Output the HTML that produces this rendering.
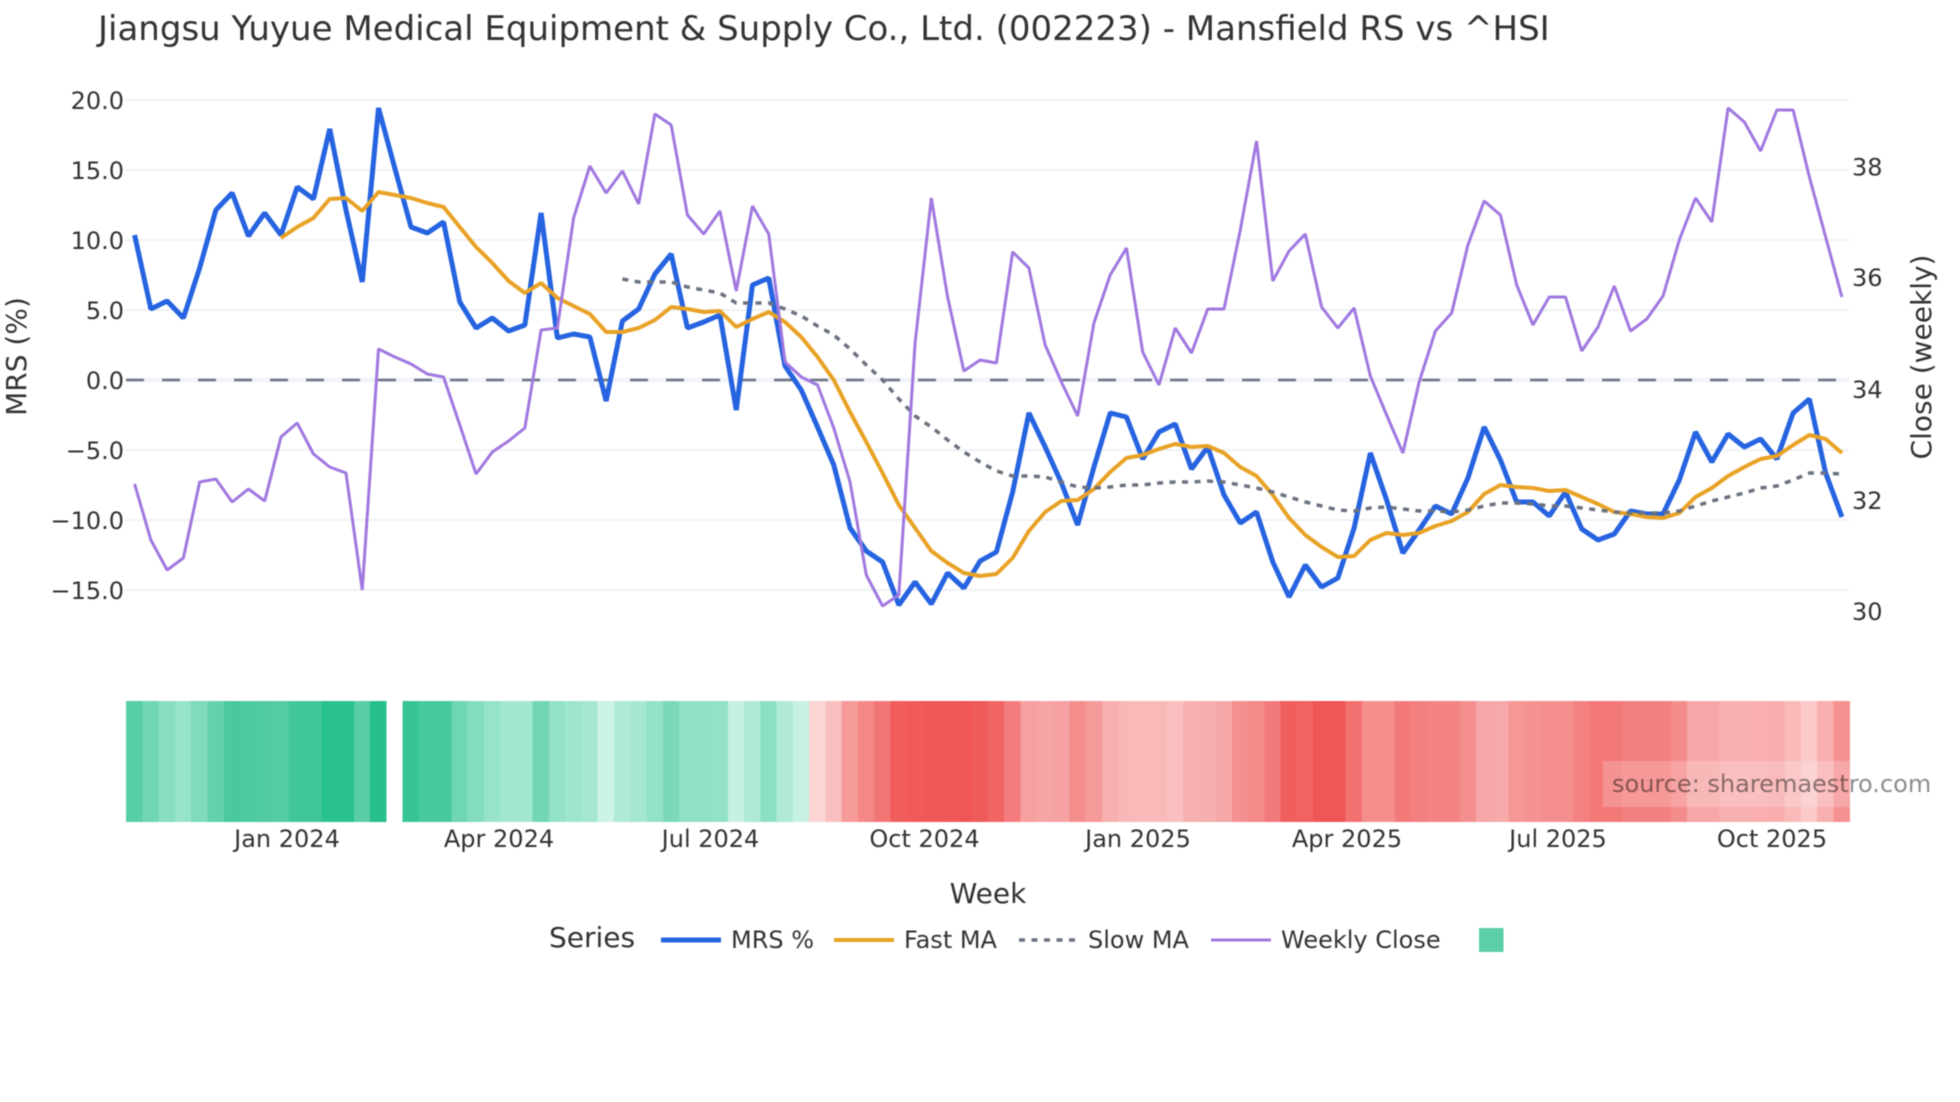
<!DOCTYPE html>
<html>
<head>
<meta charset="utf-8">
<title>Mansfield RS</title>
<style>
html,body{margin:0;padding:0;background:#fff;width:1960px;height:1102px;overflow:hidden}
svg{display:block;filter:blur(.4px)}
text{font-family:"DejaVu Sans",sans-serif;fill:#333}
.t{font-size:24px}
.a{font-size:28px}
.m{text-anchor:middle}
.e{text-anchor:end}
polyline{fill:none;vector-effect:non-scaling-stroke;stroke-linejoin:bevel}
</style>
</head>
<body>
<svg width="1960" height="1102" viewBox="0 0 1960 1102" xmlns="http://www.w3.org/2000/svg">
<rect width="1960" height="1102" fill="#fff"/>
<text x="98" y="40" style="font-size:34px">Jiangsu Yuyue Medical Equipment &amp; Supply Co., Ltd. (002223) - Mansfield RS vs ^HSI</text>

<g fill="#eff1f5">
<rect x="126" y="99" width="1723" height="2"/>
<rect x="126" y="169" width="1723" height="2"/>
<rect x="126" y="239" width="1723" height="2"/>
<rect x="126" y="309" width="1723" height="2"/>
<rect x="126" y="449" width="1723" height="2"/>
<rect x="126" y="519" width="1723" height="2"/>
<rect x="126" y="589" width="1723" height="2"/>
</g>
<rect x="126" y="377.5" width="1723" height="5" fill="#f3f4fb"/>
<line x1="126" y1="380" x2="1849" y2="380" stroke="#6b7280" stroke-width="2.5" stroke-dasharray="18 18"/>

<g class="t">
<text class="t e" x="124" y="109">20.0</text>
<text class="t e" x="124" y="179">15.0</text>
<text class="t e" x="124" y="249">10.0</text>
<text class="t e" x="124" y="319">5.0</text>
<text class="t e" x="124" y="389">0.0</text>
<text class="t e" x="124" y="459">−5.0</text>
<text class="t e" x="124" y="529">−10.0</text>
<text class="t e" x="124" y="599">−15.0</text>
<text class="t" x="1852" y="175.5">38</text>
<text class="t" x="1852" y="286">36</text>
<text class="t" x="1852" y="398">34</text>
<text class="t" x="1852" y="509">32</text>
<text class="t" x="1852" y="620">30</text>
</g>
<text class="a m" transform="translate(26,356.5) rotate(-90)">MRS (%)</text>
<text class="a m" transform="translate(1931,357) rotate(-90)">Close (weekly)</text>

<g transform="translate(134.6,0) scale(16.26,1)">
<polyline stroke="#2563e0" stroke-width="5" points="0,235 1,309 2,301 3,318 4,268 5,210 6,193 7,236 8,213 9,235 10,187 11,199 12,129 13,210 14,282 15,108 16,168 17,227 18,233 19,222 20,302 21,328 22,318 23,331 24,325 25,213 26,338 27,334 28,337 29,401 30,321 31,309 32,274 33,254 34,328 35,322 36,315 37,410 38,285 39,278 40,366 41,390 42,427 43,465 44,528 45,551 46,562 47,605 48,582 49,604 50,573 51,588 52,561 53,552 54,492 55,413 56,447 57,483 58,525 59,467 60,413 61,417 62,459 63,432 64,424 65,469 66,447 67,495 68,523 69,512 70,562 71,597 72,565 73,587 74,578 75,528 76,453 77,500 78,553 79,530 80,506 81,514 82,478 83,427 84,460 85,502 86,502 87,516 88,492 89,529 90,540 91,534 92,511 93,514 94,514 95,480 96,432 97,462 98,434 99,447 100,439 101,459 102,413 103,399 104,473 105,517"/>
<polyline stroke="#e8a226" stroke-width="4" points="9,238 10,227 11,218 12,199 13,198 14,211 15,192 16,195 17,198 18,203 19,207 20,227 21,247 22,263 23,281 24,293 25,283 26,298 27,306 28,314 29,332 30,332 31,328 32,320 33,307 34,309 35,312 36,311 37,327 38,319 39,312 40,322 41,337 42,357 43,380 44,412 45,442 46,473 47,505 48,528 49,551 50,563 51,573 52,576 53,574 54,558 55,531 56,512 57,501 58,500 59,489 60,472 61,458 62,455 63,449 64,444 65,447 66,446 67,453 68,467 69,476 70,495 71,518 72,535 73,547 74,557 75,556 76,540 77,533 78,535 79,533 80,526 81,521 82,512 83,494 84,485 85,487 86,488 87,491 88,490 89,497 90,504 91,512 92,514 93,517 94,518 95,513 96,497 97,488 98,476 99,467 100,459 101,456 102,445 103,435 104,439 105,453"/>
<polyline stroke="#6b7280" stroke-width="3.5" stroke-dasharray="6 6.5" points="30,279 31,282 32,282 33,282 34,287 35,290 36,293 37,303 38,303 39,303 40,309 41,316 42,326 43,335 44,349 45,365 46,380 47,399 48,416 49,427 50,440 51,452 52,462 53,471 54,476 55,476 56,477 57,482 58,487 59,488 60,487 61,485 62,485 63,483 64,482 65,482 66,481 67,482 68,485 69,488 70,492 71,497 72,502 73,506 74,510 75,511 76,508 77,507 78,509 79,511 80,511 81,512 82,510 83,506 84,503 85,503 86,504 87,506 88,506 89,508 90,510 91,512 92,513 93,513 94,513 95,511 96,506 97,501 98,497 99,493 100,488 101,486 102,480 103,473 104,473 105,474"/>
<polyline stroke="#a078e0" stroke-width="3" points="0,484 1,540 2,570 3,558 4,482 5,479 6,502 7,489 8,501 9,437 10,423 11,454 12,467 13,473 14,590 15,349 16,357 17,364 18,374 19,377 20,425 21,474 22,452 23,441 24,428 25,330 26,328 27,218 28,166 29,193 30,171 31,204 32,114 33,125 34,215 35,234 36,211 37,291 38,206 39,234 40,362 41,377 42,385 43,428 44,482 45,575 46,606 47,595 48,343 49,198 50,297 51,371 52,360 53,363 54,252 55,268 56,345 57,382 58,416 59,323 60,275 61,248 62,352 63,385 64,328 65,353 66,309 67,309 68,230 69,141 70,281 71,251 72,234 73,307 74,328 75,308 76,376 77,415 78,453 79,382 80,331 81,313 82,245 83,201 84,215 85,285 86,325 87,297 88,297 89,351 90,327 91,286 92,331 93,319 94,296 95,240 96,198 97,222 98,108 99,122 100,151 101,110 102,110 103,177 104,237 105,297"/>
</g>

<g transform="translate(126.2,701) scale(16.26,121)" shape-rendering="crispEdges">
<rect x="0" width="1" height="1" fill="#58cea8"/>
<rect x="1" width="1" height="1" fill="#70d6b4"/>
<rect x="2" width="1" height="1" fill="#88ddc2"/>
<rect x="3" width="1" height="1" fill="#98e3cb"/>
<rect x="4" width="1" height="1" fill="#80dbbe"/>
<rect x="5" width="1" height="1" fill="#62d1ac"/>
<rect x="6" width="1" height="1" fill="#4ac9a0"/>
<rect x="7" width="1" height="1" fill="#4dcaa1"/>
<rect x="8" width="1" height="1" fill="#50cba3"/>
<rect x="9" width="1" height="1" fill="#53cca4"/>
<rect x="10" width="1" height="1" fill="#41c69b"/>
<rect x="11" width="1" height="1" fill="#41c69b"/>
<rect x="12" width="1" height="1" fill="#2ac191"/>
<rect x="13" width="1" height="1" fill="#2ac191"/>
<rect x="14" width="1" height="1" fill="#58cda7"/>
<rect x="15" width="1" height="1" fill="#28bf8f"/>
<rect x="17" width="1" height="1" fill="#37c497"/>
<rect x="18" width="1" height="1" fill="#47c89e"/>
<rect x="19" width="1" height="1" fill="#47c89e"/>
<rect x="20" width="1" height="1" fill="#6fd6b4"/>
<rect x="21" width="1" height="1" fill="#84dcc0"/>
<rect x="22" width="1" height="1" fill="#96e3ca"/>
<rect x="23" width="1" height="1" fill="#a1e6cf"/>
<rect x="24" width="1" height="1" fill="#a1e6cf"/>
<rect x="25" width="1" height="1" fill="#72d6b5"/>
<rect x="26" width="1" height="1" fill="#93e2c8"/>
<rect x="27" width="1" height="1" fill="#9de5cd"/>
<rect x="28" width="1" height="1" fill="#a5e7d2"/>
<rect x="29" width="1" height="1" fill="#cdf2e6"/>
<rect x="30" width="1" height="1" fill="#aeead6"/>
<rect x="31" width="1" height="1" fill="#a5e7d2"/>
<rect x="32" width="1" height="1" fill="#93e1c8"/>
<rect x="33" width="1" height="1" fill="#7bd9ba"/>
<rect x="34" width="1" height="1" fill="#90e1c6"/>
<rect x="35" width="1" height="1" fill="#90e1c6"/>
<rect x="36" width="1" height="1" fill="#93e1c8"/>
<rect x="37" width="1" height="1" fill="#c5f0e2"/>
<rect x="38" width="1" height="1" fill="#aee9d6"/>
<rect x="39" width="1" height="1" fill="#8be0c4"/>
<rect x="40" width="1" height="1" fill="#b0ead7"/>
<rect x="41" width="1" height="1" fill="#c7f1e3"/>
<rect x="42" width="1" height="1" fill="#fcd4d4"/>
<rect x="43" width="1" height="1" fill="#f9bfbf"/>
<rect x="44" width="1" height="1" fill="#f69a9a"/>
<rect x="45" width="1" height="1" fill="#f58787"/>
<rect x="46" width="1" height="1" fill="#f27676"/>
<rect x="47" width="1" height="1" fill="#f15c5c"/>
<rect x="48" width="1" height="1" fill="#f15a5a"/>
<rect x="49" width="1" height="1" fill="#f05858"/>
<rect x="50" width="1" height="1" fill="#f05757"/>
<rect x="51" width="1" height="1" fill="#f05656"/>
<rect x="52" width="1" height="1" fill="#ef5a5a"/>
<rect x="53" width="1" height="1" fill="#f16464"/>
<rect x="54" width="1" height="1" fill="#f47c7c"/>
<rect x="55" width="1" height="1" fill="#f6a0a0"/>
<rect x="56" width="1" height="1" fill="#f7a4a4"/>
<rect x="57" width="1" height="1" fill="#f6a2a2"/>
<rect x="58" width="1" height="1" fill="#f58d8d"/>
<rect x="59" width="1" height="1" fill="#f59999"/>
<rect x="60" width="1" height="1" fill="#f7afaf"/>
<rect x="61" width="1" height="1" fill="#fab7b7"/>
<rect x="62" width="1" height="1" fill="#f9b9b9"/>
<rect x="63" width="1" height="1" fill="#f9b9b9"/>
<rect x="64" width="1" height="1" fill="#fabfbf"/>
<rect x="65" width="1" height="1" fill="#f7b0b0"/>
<rect x="66" width="1" height="1" fill="#f7aeae"/>
<rect x="67" width="1" height="1" fill="#f6a7a7"/>
<rect x="68" width="1" height="1" fill="#f59090"/>
<rect x="69" width="1" height="1" fill="#f58a8a"/>
<rect x="70" width="1" height="1" fill="#f37a7a"/>
<rect x="71" width="1" height="1" fill="#f15e5e"/>
<rect x="72" width="1" height="1" fill="#f26262"/>
<rect x="73" width="1" height="1" fill="#f05656"/>
<rect x="74" width="1" height="1" fill="#f05656"/>
<rect x="75" width="1" height="1" fill="#f37070"/>
<rect x="76" width="1" height="1" fill="#f68e8e"/>
<rect x="77" width="1" height="1" fill="#f68e8e"/>
<rect x="78" width="1" height="1" fill="#f47a7a"/>
<rect x="79" width="1" height="1" fill="#f47f7f"/>
<rect x="80" width="1" height="1" fill="#f48383"/>
<rect x="81" width="1" height="1" fill="#f48383"/>
<rect x="82" width="1" height="1" fill="#f58f8f"/>
<rect x="83" width="1" height="1" fill="#f7a7a7"/>
<rect x="84" width="1" height="1" fill="#f7a9a9"/>
<rect x="85" width="1" height="1" fill="#f69797"/>
<rect x="86" width="1" height="1" fill="#f59292"/>
<rect x="87" width="1" height="1" fill="#f58f8f"/>
<rect x="88" width="1" height="1" fill="#f58e8e"/>
<rect x="89" width="1" height="1" fill="#f48080"/>
<rect x="90" width="1" height="1" fill="#f37878"/>
<rect x="91" width="1" height="1" fill="#f37878"/>
<rect x="92" width="1" height="1" fill="#f47f7f"/>
<rect x="93" width="1" height="1" fill="#f47f7f"/>
<rect x="94" width="1" height="1" fill="#f47f7f"/>
<rect x="95" width="1" height="1" fill="#f58c8c"/>
<rect x="96" width="1" height="1" fill="#f7a7a7"/>
<rect x="97" width="1" height="1" fill="#f7a7a7"/>
<rect x="98" width="1" height="1" fill="#f9b0b0"/>
<rect x="99" width="1" height="1" fill="#f9b0b0"/>
<rect x="100" width="1" height="1" fill="#f9afaf"/>
<rect x="101" width="1" height="1" fill="#f8acac"/>
<rect x="102" width="1" height="1" fill="#fab9b9"/>
<rect x="103" width="1" height="1" fill="#fcc9c9"/>
<rect x="104" width="1" height="1" fill="#f9b0b0"/>
<rect x="105" width="1" height="1" fill="#f69191"/>
</g>

<text class="t m" x="287" y="847">Jan 2024</text>
<text class="t m" x="499" y="847">Apr 2024</text>
<text class="t m" x="710.5" y="847">Jul 2024</text>
<text class="t m" x="924.5" y="847">Oct 2024</text>
<text class="t m" x="1138" y="847">Jan 2025</text>
<text class="t m" x="1347" y="847">Apr 2025</text>
<text class="t m" x="1558" y="847">Jul 2025</text>
<text class="t m" x="1772" y="847">Oct 2025</text>
<text class="a m" x="988" y="903">Week</text>

<text class="a" x="549" y="947">Series</text>
<line x1="661" y1="940" x2="721" y2="940" stroke="#2563e0" stroke-width="5"/>
<text class="t" x="731" y="948">MRS %</text>
<line x1="834" y1="940" x2="894" y2="940" stroke="#e8a226" stroke-width="4"/>
<text class="t" x="904" y="948">Fast MA</text>
<line x1="1019" y1="940" x2="1079" y2="940" stroke="#6b7280" stroke-width="3.5" stroke-dasharray="6 6.5"/>
<text class="t" x="1088" y="948">Slow MA</text>
<line x1="1211" y1="940" x2="1271" y2="940" stroke="#a078e0" stroke-width="3"/>
<text class="t" x="1281" y="948">Weekly Close</text>
<rect x="1479" y="928" width="24.5" height="24" fill="#5ccfa9"/>

<rect x="1603" y="761" width="340" height="46" fill="#fff" fill-opacity=".2"/>
<text class="t" x="1612" y="792" style="fill:#000;fill-opacity:.45">source: sharemaestro.com</text>
</svg>
</body>
</html>
